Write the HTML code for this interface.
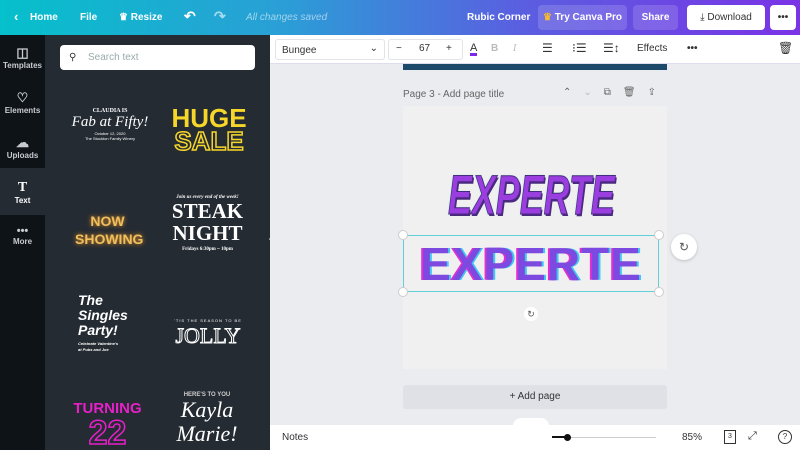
<!DOCTYPE html>
<html><head><meta charset="utf-8"><style>
*{box-sizing:border-box;margin:0;padding:0}
html,body{width:800px;height:450px;overflow:hidden}
body{font-family:"Liberation Sans",sans-serif;background:#ebecf0;position:relative}
.top{position:absolute;left:0;top:0;width:800px;height:35px;background:linear-gradient(90deg,#06c0cb 0%,#2a9fd6 35%,#5a5fe0 65%,#7a33e6 100%);color:#fff;font-size:10px;font-weight:bold}
.top span{position:absolute;top:12px}
.btn{position:absolute;top:5px;height:25px;border-radius:4px;background:rgba(255,255,255,.15);color:#fff;font-size:10px;font-weight:bold;line-height:25px;text-align:center}
.rail{position:absolute;left:0;top:35px;width:45px;height:415px;background:#0e1318}
.ri{position:absolute;left:0;width:45px;text-align:center;color:#c8ccd2;font-size:8px;font-weight:bold}
.panel{position:absolute;left:45px;top:35px;width:225px;height:415px;background:#252b33;overflow:hidden}
.search{position:absolute;left:15px;top:10px;width:195px;height:25px;background:#fff;border-radius:4px;color:#9aa;font-size:10px;line-height:25px;padding-left:28px}
.tb{position:absolute;left:270px;top:35px;width:530px;height:29px;background:#fff;border-bottom:1px solid #dde;font-size:10px;color:#333}
.tb span{position:absolute;top:8px}
.page{position:absolute;left:403px;top:106px;width:264px;height:263px;background:#f0f0f0}
.bot{position:absolute;left:270px;top:425px;width:530px;height:25px;background:#fff;font-size:10px;color:#333}
</style></head><body>
<div class="top">
<span style="left:14px;font-size:13px;top:9px">‹</span><span style="left:30px">Home</span>
<span style="left:80px">File</span><span style="left:119px">♛ Resize</span>
<span style="left:184px;font-size:14px;top:8px">↶</span><span style="left:214px;font-size:14px;top:8px;opacity:.6">↷</span>
<span style="left:246px;font-weight:normal;font-style:italic;opacity:.55">All changes saved</span>
<span style="left:467px">Rubic Corner</span>
<div class="btn" style="left:538px;width:89px"><span style="color:#f5b82e;position:static">♛</span> Try Canva Pro</div>
<div class="btn" style="left:633px;width:45px">Share</div>
<div class="btn" style="left:687px;width:78px;background:#fff;color:#333;font-weight:normal">⤓ Download</div>
<div class="btn" style="left:770px;width:26px;background:#fff;color:#333">•••</div>
</div>
<div class="rail">
<div class="ri" style="top:10px"><div style="font-size:13px">◫</div>Templates</div>
<div class="ri" style="top:55px"><div style="font-size:13px">♡</div>Elements</div>
<div class="ri" style="top:100px"><div style="font-size:13px">☁</div>Uploads</div>
<div style="position:absolute;left:0;top:133px;width:45px;height:47px;background:#252b33"></div>
<div class="ri" style="top:145px;color:#fff"><div style="font-size:14px;font-family:'Liberation Serif'">T</div>Text</div>
<div class="ri" style="top:190px"><div style="font-size:11px">•••</div>More</div>
</div>
<div class="panel">
<div class="search"><span style="position:absolute;left:9px;top:0;color:#333">⚲</span>Search text</div>
<div style="position:absolute;left:20px;top:73px;width:90px;text-align:center;color:#fff"><div style="font-size:6px;font-family:'Liberation Serif';font-weight:bold">CLAUDIA IS</div><div style="font-size:15px;font-style:italic;font-family:'Liberation Serif'">Fab at Fifty!</div><div style="font-size:4px">October 12, 2020<br>The Stockton Family Winery</div></div>
<div style="position:absolute;left:125px;top:72px;width:78px;text-align:center;color:#f6d629;font-weight:bold;font-size:26px;line-height:23px">HUGE<br><span style="color:transparent;-webkit-text-stroke:1.5px #f6d629">SALE</span></div>
<div style="position:absolute;left:30px;top:177px;width:65px;text-align:center;color:#f0c060;font-weight:bold;font-size:14px;line-height:18px;text-shadow:0 0 5px #e09020">NOW<br>SHOWING</div>
<div style="position:absolute;left:120px;top:160px;width:85px;text-align:center;color:#fff;font-family:'Liberation Serif';font-weight:bold"><div style="font-size:5px;font-style:italic">Join us every end of the week!</div><div style="font-size:21px;line-height:22px">STEAK<br>NIGHT</div><div style="font-size:5px;margin-top:3px">Fridays 6:30pm ~ 10pm</div></div>
<div style="position:absolute;left:33px;top:258px;color:#fff;font-weight:bold;font-style:italic;font-size:14px;line-height:15px">The<br>Singles<br>Party!<div style="font-size:4px;line-height:6px;margin-top:3px">Celebrate Valentine's<br>at Pubs and Joe</div></div>
<div style="position:absolute;left:122px;top:283px;width:82px;text-align:center;color:#fff"><div style="font-size:4px;letter-spacing:1px">'TIS THE SEASON TO BE</div><div style="font-family:'Liberation Serif';font-size:22px;color:transparent;-webkit-text-stroke:1px #fff">JOLLY</div></div>
<div style="position:absolute;left:25px;top:365px;width:75px;text-align:center;color:#e620c8;font-weight:bold;font-size:15px">TURNING<div style="font-size:34px;color:transparent;-webkit-text-stroke:1.5px #e620c8;line-height:32px">22</div></div>
<div style="position:absolute;left:122px;top:357px;width:80px;text-align:center;color:#fff"><div style="font-size:6px;font-weight:bold;color:#ccc">HERE'S TO YOU</div><div style="font-family:'Liberation Serif';font-style:italic;font-size:22px;line-height:24px">Kayla<br>Marie!</div></div>
<div style="position:absolute;left:221px;top:190px;width:8px;height:30px;background:#252b33;border-radius:0 6px 6px 0;color:#fff;font-size:7px;line-height:30px;text-align:center">‹</div>
</div>
<div class="tb">
<div style="position:absolute;left:5px;top:4px;width:110px;height:21px;border:1px solid #e2e4e8;border-radius:3px;padding:5px 6px">Bungee<span style="position:absolute;right:6px;top:3px">⌄</span></div>
<div style="position:absolute;left:118px;top:4px;width:75px;height:21px;border:1px solid #e2e4e8;border-radius:3px"></div>
<span style="left:126px">−</span><span style="left:149px">67</span><span style="left:176px">+</span>
<span style="left:200px;border-bottom:3px solid #7d2ae8;line-height:10px;font-size:11px">A</span>
<span style="left:221px;color:#bbb;font-weight:bold">B</span><span style="left:243px;color:#bbb;font-style:italic;font-family:'Liberation Serif'">I</span>
<span style="left:272px;font-size:12px;top:6px">☰</span><span style="left:302px;font-size:12px;top:6px">⁝☰</span><span style="left:333px;font-size:12px;top:6px">☰↕</span>
<span style="left:367px">Effects</span><span style="left:417px;font-weight:bold">•••</span><span style="left:508px;font-size:12px;top:6px">🗑</span>
</div>
<div style="position:absolute;left:403px;top:64px;width:264px;height:6px;background:#1e4a6a"></div>
<div style="position:absolute;left:403px;top:89px;font-size:10px;color:#666">Page 3 - Add page title</div>
<div style="position:absolute;left:563px;top:87px;font-size:10px;color:#666;letter-spacing:12px">⌃<span style="color:#bbb">⌄</span>⧉🗑⇪</div>
<div class="page"></div>
<div style="position:absolute;left:448px;top:164px;white-space:nowrap;transform-origin:0 0;transform:scaleX(.64);font-family:'Liberation Sans',sans-serif;font-weight:bold;font-style:italic;font-size:56px;line-height:62px;color:#9b3ee0;-webkit-text-stroke:1px #4a2a80;text-shadow:2px 2px 0 #4a2a80,0 0 2px #60f0c0">EXPERTE</div>
<div style="position:absolute;left:403px;top:235px;width:256px;height:57px;border:1px solid #5fd0d8"></div>
<div style="position:absolute;left:403px;top:238px;width:256px;text-align:center;font-weight:900;font-size:46px;line-height:52px;color:#7c4ae0;letter-spacing:1px;text-shadow:-2px 0 0 #e030d0,2px 0 0 #40c8f0">EXPERTE</div>
<div style="position:absolute;left:398px;top:230px;width:10px;height:10px;border-radius:50%;background:#fff;border:1px solid #ccc"></div>
<div style="position:absolute;left:654px;top:230px;width:10px;height:10px;border-radius:50%;background:#fff;border:1px solid #ccc"></div>
<div style="position:absolute;left:398px;top:287px;width:10px;height:10px;border-radius:50%;background:#fff;border:1px solid #ccc"></div>
<div style="position:absolute;left:654px;top:287px;width:10px;height:10px;border-radius:50%;background:#fff;border:1px solid #ccc"></div>
<div style="position:absolute;left:524px;top:307px;width:14px;height:14px;border-radius:50%;background:#fff;font-size:9px;text-align:center;line-height:14px;color:#555">↻</div>
<div style="position:absolute;left:671px;top:234px;width:26px;height:26px;border-radius:50%;background:#fff;box-shadow:0 1px 3px rgba(0,0,0,.2);text-align:center;line-height:26px;font-size:12px;color:#555">↻</div>
<div style="position:absolute;left:403px;top:385px;width:264px;height:24px;background:#dfe1e6;border-radius:3px;text-align:center;line-height:24px;font-size:10px;color:#333">+ Add page</div>
<div style="position:absolute;left:513px;top:418px;width:36px;height:10px;background:#fff;border-radius:8px 8px 0 0"></div>
<div class="bot">
<span style="position:absolute;left:12px;top:7px">Notes</span>
<div style="position:absolute;left:282px;top:12px;width:104px;height:1px;background:#ccc"></div>
<div style="position:absolute;left:282px;top:11px;width:15px;height:2px;background:#111"></div>
<div style="position:absolute;left:294px;top:9px;width:7px;height:7px;border-radius:50%;background:#111"></div>
<span style="position:absolute;left:412px;top:7px">85%</span>
<div style="position:absolute;left:454px;top:5px;width:12px;height:14px;border:1px solid #333;font-size:7px;text-align:center;line-height:12px">3</div>
<span style="position:absolute;left:478px;top:5px;font-size:11px">⤢</span>
<div style="position:absolute;left:508px;top:5px;width:14px;height:14px;border:1px solid #333;border-radius:50%;font-size:8px;text-align:center;line-height:12px">?</div>
</div>
</body></html>
